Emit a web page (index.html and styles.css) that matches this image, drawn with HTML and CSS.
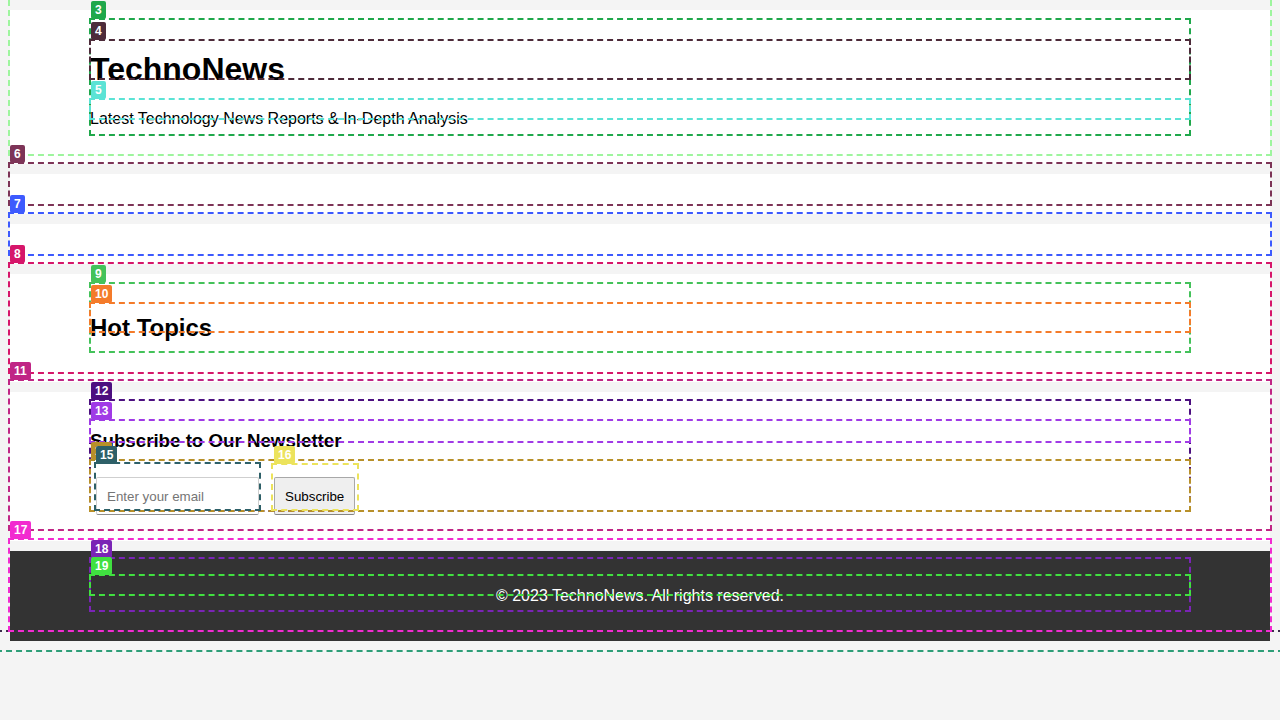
FILE: index.html
```html
<!DOCTYPE html>
<html lang="en">
<head>
<meta charset="utf-8">
<title>TechnoNews</title>
<link rel="stylesheet" href="styles.css">
</head>
<body>
<header class="site-header">
  <div class="container">
    <h1>TechnoNews</h1>
    <p>Latest Technology News Reports &amp; In-Depth Analysis</p>
  </div>
</header>
<nav class="main-nav"></nav>
<section class="featured"></section>
<section class="topics">
  <div class="container">
    <h2>Hot Topics</h2>
  </div>
</section>
<section class="newsletter">
  <div class="container">
    <h3>Subscribe to Our Newsletter</h3>
    <form class="signup">
      <input type="email" placeholder="Enter your email">
      <button type="button">Subscribe</button>
    </form>
  </div>
</section>
<footer class="site-footer">
  <div class="container">
    <p>© 2023 TechnoNews. All rights reserved.</p>
  </div>
</footer>

<div class="dbg">
  <div class="ob ob-h"></div>
  <div class="ob ob-a"></div>
  <div class="ob ob-b"></div>
  <div class="ob ob3"></div>
  <div class="ob ob4"></div>
  <div class="ob ob5"></div>
  <div class="ob ob6"></div>
  <div class="ob ob7"></div>
  <div class="ob ob8"></div>
  <div class="ob ob9"></div>
  <div class="ob ob10"></div>
  <div class="ob ob11"></div>
  <div class="ob ob12"></div>
  <div class="ob ob13"></div>
  <div class="ob ob14"></div>
  <div class="ob ob15"></div>
  <div class="ob ob16"></div>
  <div class="ob ob17"></div>
  <div class="ob ob18"></div>
  <div class="ob ob19"></div>
  <span class="lb lb3">3</span>
  <span class="lb lb4">4</span>
  <span class="lb lb5">5</span>
  <span class="lb lb6">6</span>
  <span class="lb lb7">7</span>
  <span class="lb lb8">8</span>
  <span class="lb lb9">9</span>
  <span class="lb lb10">10</span>
  <span class="lb lb11">11</span>
  <span class="lb lb12">12</span>
  <span class="lb lb13">13</span>
  <span class="lb lb14">14</span>
  <span class="lb lb15">15</span>
  <span class="lb lb16">16</span>
  <span class="lb lb17">17</span>
  <span class="lb lb18">18</span>
  <span class="lb lb19">19</span>
</div>
</body>
</html>
```

FILE: styles.css
```css
html, body {
  margin: 0;
  padding: 0;
}
body {
  margin: 10px;
  background: #f4f4f4;
  font-family: "Liberation Sans", Arial, sans-serif;
  font-size: 16px;
  color: #000;
  overflow: hidden;
}

.container {
  width: 1100px;
  margin: 0 auto;
  display: flow-root;
}

.site-header {
  background: #fff;
  padding: 20px 0;
  margin-bottom: 10px;
}
.site-header h1 {
  font-size: 32px;
  margin: 21.44px 0;
}
.site-header p {
  margin: 16px 0;
}

.main-nav,
.featured {
  background: #fff;
  height: 40px;
  margin-bottom: 10px;
}

.topics {
  background: #fff;
  padding: 20px 0;
  margin-bottom: 10px;
}
.topics h2 {
  font-size: 24px;
  margin: 19.92px 0;
}

.newsletter {
  background: #fff;
  padding: 20px 0;
  margin-bottom: 10px;
}
.newsletter h3 {
  font-size: 18.72px;
  margin: 18.72px 0;
}
.signup {
  display: flex;
  align-items: flex-start;
  gap: 15px;
  padding: 6px 0 6px 6px;
}
.signup input {
  box-sizing: border-box;
  width: 163px;
  height: 38px;
  padding: 10px;
  margin: 0;
  font-family: "Liberation Sans", Arial, sans-serif;
  font-size: 13.33px;
  background: #fff;
  border: 1px solid #cfcfcf;
  border-bottom-color: #8f8f8f;
  border-radius: 2px;
}
.signup input::placeholder {
  color: #757575;
}
.signup button {
  box-sizing: border-box;
  height: 38px;
  padding: 0 10px;
  margin: 0;
  font-family: "Liberation Sans", Arial, sans-serif;
  font-size: 13.33px;
  color: #000;
  background: #efefef;
  border: 1px solid #a8a8a8;
  border-bottom-color: #858585;
  border-radius: 2px;
}

.site-footer {
  background: #333;
  color: #fff;
  padding: 20px 0;
  text-align: center;
  box-shadow: 0 1px 0 #b4b4b4;
}
.site-footer p {
  margin: 16px 0;
}

/* ---------- inspector overlay ---------- */
.dbg {
  position: absolute;
  left: 0;
  top: 0;
  width: 1280px;
  height: 720px;
  overflow: hidden;
  pointer-events: none;
}
.ob {
  position: absolute;
  box-sizing: border-box;
  border: 2px dashed currentColor;
}
.lb {
  position: absolute;
  height: 18px;
  line-height: 18px;
  padding: 0 4px;
  border-radius: 2px;
  color: #fff;
  font-family: "Liberation Sans", Arial, sans-serif;
  font-size: 12px;
  font-weight: bold;
}

/* wide sections: x 9..1271 ; containers: x 90..1190 */
.ob-h { left: 8px; top: -20px; width: 1264px; height: 176px; color: #9ef59e; }
.ob-a { left: -4px; top: -20px; width: 1288px; height: 652px; color: #3b2a4a; }
.ob-b { left: -4px; top: -20px; width: 1288px; height: 672px; color: #2e9e78; }
.ob3  { left: 89px; top: 18px;  width: 1102px; height: 118px; color: #1fa84b; }
.ob4  { left: 89px; top: 39px;  width: 1102px; height: 41px;  color: #4d2b3a; }
.ob5  { left: 89px; top: 98px;  width: 1102px; height: 22px;  color: #5be3d5; }
.ob6  { left: 8px;  top: 162px; width: 1264px; height: 44px;  color: #7d3457; }
.ob7  { left: 8px;  top: 212px; width: 1264px; height: 44px;  color: #3d5afe; }
.ob8  { left: 8px;  top: 262px; width: 1264px; height: 112px; color: #d6166a; }
.ob9  { left: 89px; top: 282px; width: 1102px; height: 71px;  color: #44c25a; }
.ob10 { left: 89px; top: 302px; width: 1102px; height: 31px;  color: #f47b2a; }
.ob11 { left: 8px;  top: 379px; width: 1264px; height: 152px; color: #c02585; }
.ob12 { left: 89px; top: 399px; width: 1102px; height: 113px; color: #4c0f80; }
.ob13 { left: 89px; top: 419px; width: 1102px; height: 24px;  color: #a03ae6; }
.ob14 { left: 89px; top: 459px; width: 1102px; height: 53px;  color: #b8902a; }
.ob15 { left: 94px; top: 462px; width: 167px;  height: 49px;  color: #2e6068; }
.ob16 { left: 271px; top: 463px; width: 88px;  height: 48px;  color: #ece35c; }
.ob17 { left: 8px;  top: 538px; width: 1264px; height: 94px;  color: #f22bd0; }
.ob18 { left: 89px; top: 557px; width: 1102px; height: 55px;  color: #7a24b5; }
.ob19 { left: 89px; top: 574px; width: 1102px; height: 22px;  color: #40e040; }

.lb3  { left: 91px; top: 1px;   background: #1fa84b; }
.lb4  { left: 91px; top: 22px;  background: #4d2b3a; }
.lb5  { left: 91px; top: 81px;  background: #5be3d5; }
.lb6  { left: 10px; top: 145px; background: #7d3457; }
.lb7  { left: 10px; top: 195px; background: #3d5afe; }
.lb8  { left: 10px; top: 245px; background: #d6166a; }
.lb9  { left: 91px; top: 265px; background: #44c25a; }
.lb10 { left: 91px; top: 285px; background: #f47b2a; }
.lb11 { left: 10px; top: 362px; background: #c02585; }
.lb12 { left: 91px; top: 382px; background: #4c0f80; }
.lb13 { left: 91px; top: 402px; background: #a03ae6; }
.lb14 { left: 91px; top: 442px; background: #b8902a; }
.lb15 { left: 96px; top: 446px; background: #2e6068; }
.lb16 { left: 274px; top: 446px; background: #ece35c; }
.lb17 { left: 10px; top: 521px; background: #f22bd0; }
.lb18 { left: 91px; top: 540px; background: #7a24b5; }
.lb19 { left: 91px; top: 557px; background: #40e040; }
```
